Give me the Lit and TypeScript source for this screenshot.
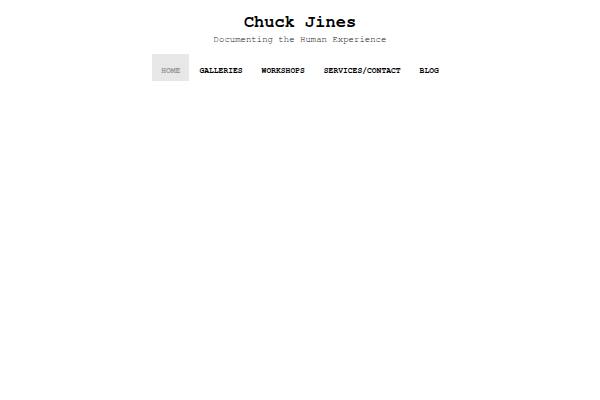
import { LitElement, html, css } from 'lit';
import { customElement, property } from 'lit/decorators.js';
import { classMap } from 'lit/directives/class-map.js';

@customElement('site-nav')
export class SiteNav extends LitElement {
    static styles = css`
    :host {
        display: block;
    }

    .menu {
        display: flex;
        flex-wrap: wrap;
        justify-content: center;
        gap: 1px;
        margin: 0;
        padding: 0;
        list-style: none;
    }

    .link {
        display: block;
        padding: 12px 9px 5px;
        color: #000;
        font-size: 8px;
        line-height: 10px;
        font-weight: bold;
        text-transform: uppercase;
        text-decoration: none;
    }

    .current {
        background: #e7e7e8;
        color: #999;
    }
    `;

    @property({ type: Array })
    items: string[] = [];

    @property()
    current = '';

    render() {
        return html`
        <nav aria-label="Main">
            <ul class="menu">
                ${this.items.map(item => html`
                <li>
                    <a class=${classMap({ link: true, current: item === this.current })} href="#">${item}</a>
                </li>`)}
            </ul>
        </nav>
        `;
    }
}

@customElement('app-root')
export class AppRoot extends LitElement {
    static styles = css`
    :host {
        display: block;
        background: #fff;
        font-family: "Courier 10 Pitch", "Nimbus Mono PS", "FreeMono", "Courier New", "Liberation Mono", monospace;
        text-align: center;
    }

    .header {
        padding: 12px 0 6px;
    }

    .title {
        margin: 0;
        color: #000;
        font-size: 17px;
        line-height: 20px;
    }

    .tagline {
        margin: 0;
        color: #111;
        font-size: 9px;
        line-height: 16px;
    }
    `;

    pages = ['Home', 'Galleries', 'Workshops', 'Services/Contact', 'Blog'];

    render() {
        return html`
        <header class="header">
            <h1 class="title">Chuck Jines</h1>
            <p class="tagline">Documenting the Human Experience</p>
        </header>
        <site-nav .items=${this.pages} current="Home"></site-nav>
        `;
    }
}

declare global {
    interface HTMLElementTagNameMap {
        'site-nav': SiteNav;
        'app-root': AppRoot;
    }
}
